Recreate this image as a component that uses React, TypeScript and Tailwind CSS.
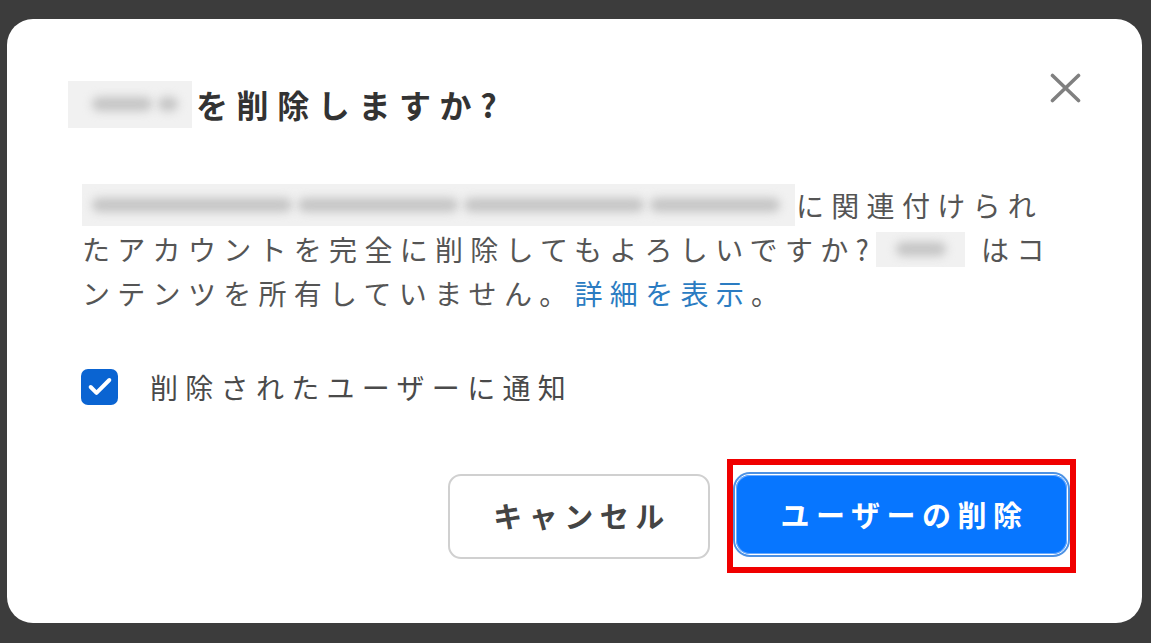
import { Check } from "lucide-react";

function Blur({ className, bars }: { className: string; bars: string[] }) {
  // 塗りつぶされた名前やメールアドレス（ぼかし表示）
  return (
    <span className={`inline-flex items-center gap-[6px] overflow-hidden align-middle bg-[#f1f1f1] ${className}`}>
      {bars.map((b, i) => (
        <span key={i} className={`h-[14px] rounded-full bg-[#c4c4c4] blur-[5px] ${b}`} />
      ))}
    </span>
  );
}

export default function App() {
  return (
    <div
      className="h-[643px] w-[1151px] bg-[#3c3c3c] pt-[19px] pl-[7px] pr-[9px] pb-[20px]"
      style={{ fontFamily: '"Noto Sans CJK JP", "Noto Sans", sans-serif' }}
    >
      <div className="relative flex h-full flex-col rounded-[26px] bg-white pl-[75px] pr-[40px] pt-[61px] pb-[50px]">
        {/* 閉じるボタン */}
        <button type="button" className="absolute right-[61px] top-[54px] text-[#808080]">
          <svg width="31" height="30" viewBox="0 0 31 30" fill="none" stroke="currentColor" strokeWidth="3.6" strokeLinecap="round">
            <path d="M2.5 2.5 28.5 27.5M28.5 2.5 2.5 27.5" />
          </svg>
        </button>

        {/* タイトル */}
        <div className="flex h-[48px] items-center">
          <Blur className="-ml-[14px] h-[47px] w-[124px] justify-center" bars={["w-[60px] ml-[10px]", "w-[20px]"]} />
          <h1 className="ml-[4px] text-[32px] font-bold tracking-[8.6px] text-[#333]">を削除しますか?</h1>
        </div>

        {/* 本文 */}
        <div className="mt-[55px] text-[28px] leading-[44px] tracking-[7.3px] text-[#555]">
          <div className="flex items-center">
            <Blur
              className="h-[42px] w-[713px] pl-[10px]"
              bars={["w-[200px]", "w-[160px]", "w-[180px]", "w-[130px]"]}
            />
            <span className="ml-[1px]">に関連付けられ</span>
          </div>
          <div className="flex items-center whitespace-nowrap">
            <span>たアカウントを完全に削除してもよろしいですか?</span>
            <Blur className="mr-[16px] h-[35px] w-[89px] justify-center" bars={["w-[50px]"]} />
            <span>はコ</span>
          </div>
          <div className="whitespace-nowrap">
            ンテンツを所有していません。<a className="text-[#2b7cc2]">詳細を表示</a>。
          </div>
        </div>

        {/* チェックボックス */}
        <label className="mt-[51px] flex items-center">
          <span className="-ml-[1px] flex h-[36px] w-[37px] items-center justify-center rounded-[7px] bg-[#0a64d2]">
            <Check size={28} strokeWidth={3.4} className="text-white" />
          </span>
          <span className="ml-[32px] text-[28px] tracking-[7.3px] text-[#4a4a4a]">削除されたユーザーに通知</span>
        </label>

        {/* ボタン */}
        <div className="mt-auto flex items-center justify-end gap-[17px] pr-[26px]">
          <button
            type="button"
            className="h-[85px] w-[262px] rounded-[13px] border-2 border-[#d0d0d0] bg-white pl-[6px] text-[29px] font-bold tracking-[6.5px] text-[#444]"
          >
            キャンセル
          </button>
          <div className="border-[6px] border-[#f00000] px-[3px] pt-[10px] pb-[13px]">
            <button
              type="button"
              className="h-[79px] w-[331px] rounded-[14px] bg-[#0776ff] pl-[6px] text-[29px] font-bold tracking-[6.5px] text-white shadow-[inset_0_0_0_1px_#69aaff,0_0_0_1px_#ffffff,0_0_0_3px_#4d92e4]"
            >
              ユーザーの削除
            </button>
          </div>
        </div>
      </div>
    </div>
  );
}
